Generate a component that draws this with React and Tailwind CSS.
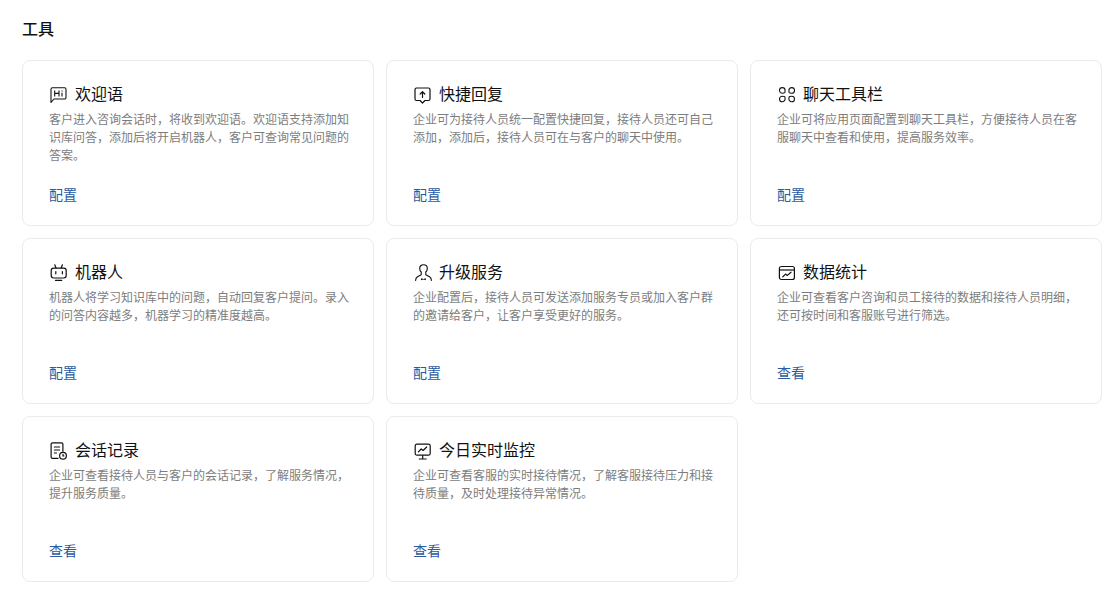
import React from "react";

const HiIcon = () => (
  <svg width="18" height="18" viewBox="0 0 18 18" fill="none" stroke="#111" strokeWidth="1.1">
    <path d="M1 16.500V3.200A1.400 1.400 0 0 1 2.400 1.800h12.200A1.400 1.400 0 0 1 16 3.200v8.400a1.400 1.400 0 0 1-1.400 1.400H4z" strokeLinejoin="round" />
    <path d="M4.700 4.400v6.200M9 4.400v6.200M4.700 7.400H9M12 6.800v3.800M12 4.400v1" />
  </svg>
);

const ReplyIcon = () => (
  <svg width="18" height="18" viewBox="0 0 18 18" fill="none" stroke="#111" strokeWidth="1.200" strokeLinejoin="round">
    <path d="M2.500 2h12A1.500 1.500 0 0 1 16 3.500v9.500a1.500 1.500 0 0 1-1.500 1.500H11L8.500 17 6 14.500H2.500A1.500 1.500 0 0 1 1 13V3.500A1.500 1.500 0 0 1 2.500 2z" />
    <path d="M8.500 11.500V5.800M6.200 8l2.300-2.300L10.800 8" strokeLinecap="round" />
  </svg>
);

const ToolbarIcon = () => (
  <svg width="18" height="18" viewBox="0 0 18 18" fill="none" stroke="#111" strokeWidth="1.100">
    <path d="M4.300 1.600a2.800 2.800 0 0 1 2.800 2.800c0 1 0 1.800-.4 2.300-.5.500-1.400.500-2.400.500a2.800 2.800 0 0 1 0-5.600z" />
    <path d="M13.700 1.600a2.800 2.800 0 0 0-2.800 2.800c0 1 0 1.800.4 2.300.5.500 1.400.500 2.400.500a2.800 2.800 0 0 0 0-5.600z" />
    <path d="M4.300 15.800a2.800 2.800 0 0 0 2.800-2.800c0-1 0-1.800-.4-2.300-.5-.5-1.400-.5-2.400-.5a2.800 2.800 0 0 0 0 5.600z" />
    <path d="M13.700 15.800a2.800 2.800 0 0 1-2.800-2.800c0-1 0-1.800.4-2.300.5-.5 1.400-.5 2.400-.5a2.800 2.800 0 0 1 0 5.600z" />
  </svg>
);

const RobotIcon = () => (
  <svg width="18" height="18" viewBox="0 0 18 18" fill="none" stroke="#111" strokeWidth="1.200" strokeLinecap="round">
    <rect x="1.200" y="4.200" width="15" height="9.800" rx="2.400" />
    <path d="M6 4 4.800.8M11.200 4 12.400.8M5.800 7.600v2.200M12.400 7.600v2.200M5.500 16.400h6.200" />
  </svg>
);

const PersonIcon = () => (
  <svg width="18" height="18" viewBox="0 0 18 18" fill="none" stroke="#111" strokeWidth="1.100" strokeLinejoin="round" strokeLinecap="round">
    <path d="M1.600 16.400c.1-2 .8-3 1.900-3.600l3.700-2V8C6.300 7.200 5.700 6 5.700 4.400 5.700 2.200 7.200.8 9.500.8s3.800 1.400 3.800 3.600c0 1.600-.6 2.800-1.500 3.600v2.800l3.700 2c1.100.6 1.800 1.600 1.900 3.600" />
    <path d="M7 14.200 9.400 15l2.400-.8v2l-2.400-.7-2.400.7z" fill="#111" stroke="none" />
  </svg>
);

const StatsIcon = () => (
  <svg width="18" height="18" viewBox="0 0 18 18" fill="none" stroke="#111" strokeWidth="1.200" strokeLinejoin="round">
    <rect x="1.400" y="2.500" width="15" height="13" rx="2" />
    <path d="M1.400 6h15" />
    <path d="m4.800 12.800 2.800-2.700 1.800 1.300 3.600-3.200" strokeLinecap="round" />
  </svg>
);

const RecordIcon = () => (
  <svg width="18" height="18" viewBox="0 0 18 18" fill="none" stroke="#111" strokeWidth="1.200">
    <path d="M8.500 16.400H2.600A1.500 1.500 0 0 1 1.100 14.900V2.300A1.500 1.500 0 0 1 2.600.8h8.800a1.500 1.500 0 0 1 1.500 1.500v7.400" />
    <path d="M3.900 5h6.200M3.900 8h6.200M3.900 11h3" />
    <circle cx="13" cy="13.800" r="3.400" />
    <path d="M13 12v2h1.400" />
  </svg>
);

const MonitorIcon = () => (
  <svg width="18" height="18" viewBox="0 0 18 18" fill="none" stroke="#111" strokeWidth="1.200" strokeLinejoin="round">
    <rect x="1.200" y="2.200" width="15" height="11" rx="1.800" />
    <path d="m4.400 9.800 2.800-2.800 1.900 1.500 3.600-3.500" strokeLinecap="round" />
    <path d="M8.700 13.200v3.600M4.800 17h7.800" />
  </svg>
);

const tools = [
  {
    icon: <HiIcon />,
    title: "欢迎语",
    desc: "客户进入咨询会话时，将收到欢迎语。欢迎语支持添加知识库问答，添加后将开启机器人，客户可查询常见问题的答案。",
    action: "配置",
  },
  {
    icon: <ReplyIcon />,
    title: "快捷回复",
    desc: "企业可为接待人员统一配置快捷回复，接待人员还可自己添加，添加后，接待人员可在与客户的聊天中使用。",
    action: "配置",
  },
  {
    icon: <ToolbarIcon />,
    title: "聊天工具栏",
    desc: "企业可将应用页面配置到聊天工具栏，方便接待人员在客服聊天中查看和使用，提高服务效率。",
    action: "配置",
  },
  {
    icon: <RobotIcon />,
    title: "机器人",
    desc: "机器人将学习知识库中的问题，自动回复客户提问。录入的问答内容越多，机器学习的精准度越高。",
    action: "配置",
  },
  {
    icon: <PersonIcon />,
    title: "升级服务",
    desc: "企业配置后，接待人员可发送添加服务专员或加入客户群的邀请给客户，让客户享受更好的服务。",
    action: "配置",
  },
  {
    icon: <StatsIcon />,
    title: "数据统计",
    desc: "企业可查看客户咨询和员工接待的数据和接待人员明细，还可按时间和客服账号进行筛选。",
    action: "查看",
  },
  {
    icon: <RecordIcon />,
    title: "会话记录",
    desc: "企业可查看接待人员与客户的会话记录，了解服务情况，提升服务质量。",
    action: "查看",
  },
  {
    icon: <MonitorIcon />,
    title: "今日实时监控",
    desc: "企业可查看客服的实时接待情况，了解客服接待压力和接待质量，及时处理接待异常情况。",
    action: "查看",
  },
];

const App = () => {
  return (
    <div className="min-h-[595px] bg-white pl-[22px] font-['Liberation_Sans','Noto_Sans_CJK_SC',sans-serif]">
      <h1 className="pt-[18px] pb-[19px] text-base leading-[23px] font-medium text-[#111]">工具</h1>
      <div className="grid grid-cols-[repeat(3,352px)] gap-3">
        {tools.map((tool) => (
          <div
            key={tool.title}
            className="flex h-[166px] flex-col rounded-lg border border-[#ebebeb] pr-[24px] pl-[26px] pt-[22px]"
          >
            <div className="flex h-[24px] items-center gap-[7px]">
              <span className="ml-px shrink-0">{tool.icon}</span>
              <span className="text-base leading-[24px] text-[#111]">{tool.title}</span>
            </div>
            <p className="mt-[4px] h-[54px] text-xs leading-[18px] text-[#7d7d7d]">{tool.desc}</p>
            <a className="mt-[20px] text-sm leading-[20px] text-[#2b5a9e]">{tool.action}</a>
          </div>
        ))}
      </div>
    </div>
  );
};

export default App;
